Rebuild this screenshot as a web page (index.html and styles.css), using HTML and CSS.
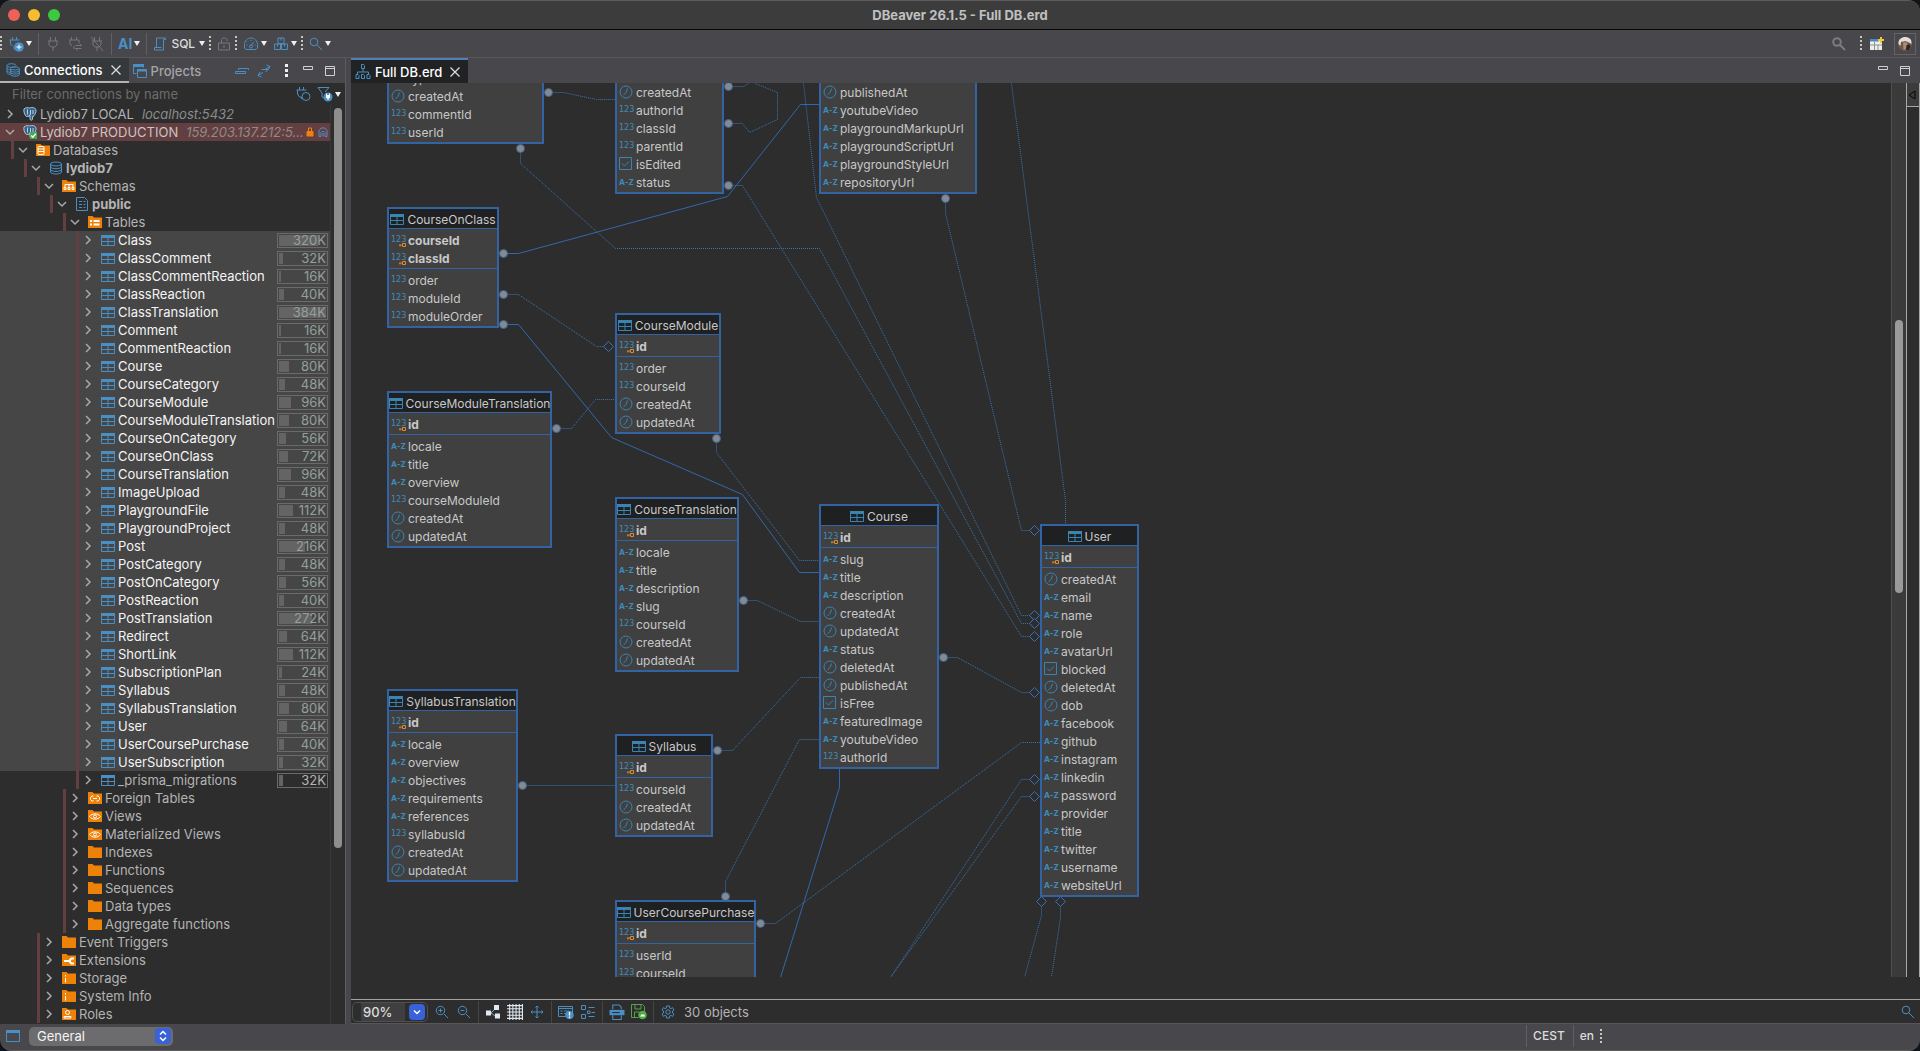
FILE: index.html
```html
<!DOCTYPE html>
<html lang="en">
<head>
    <meta charset="UTF-8">
    <meta name="viewport" content="width=device-width, initial-scale=1.0">
    <title>DBeaver 26.1.5 - Full DB.erd</title>
    <link rel="stylesheet" href="styles.css">
</head>
<body>
    <!-- Icon sprite -->
    <svg class="sprite" aria-hidden="true">
        <symbol id="i-plug" viewBox="0 0 16 16"><path d="M5.500 1v4M10.500 1v4M3 5h10M4 5v4l2 2h4l2-2V5M8 11v4" /></symbol>
        <symbol id="i-plug-add" viewBox="0 0 16 16"><path d="M4.500 1v3M8.500 1v3M1.500 4h10M2.500 4v4l2 2M6 10v3h2" /><circle cx="11" cy="11" r="4.800" fill="#4a90c8" stroke="none" /><path d="M11 8.500v5M8.500 11h5" stroke="#fff" /></symbol>
        <symbol id="i-plug-sync" viewBox="0 0 16 16"><path d="M4.500 1v3M9.500 1v3M2 4h10v3M3 4v4l2 2M7 13v-3M8.500 9.500h6l-2-2M14.500 12.500h-6l2 2" /></symbol>
        <symbol id="i-plug-off" viewBox="0 0 16 16"><path d="M5.500 1v4M10.500 1v4M3 5h10M4 5v4l2 2h4l2-2V5M8 11v4M2 1l12 14" /></symbol>
        <symbol id="i-script" viewBox="0 0 14 14"><path d="M3.500 10V1h9v1.500h-2V13h-9v-2.500h7" /></symbol>
        <symbol id="i-lock" viewBox="0 0 14 14"><path d="M1.500 6h11v7h-11zM4.500 6V2.500L6 1h2.500L10 2.500V4M7 8v3" /></symbol>
        <symbol id="i-gauge" viewBox="0 0 16 16"><path d="M1.500 12V8.500C1.500 5 4.500 2 8 2s6.500 3 6.500 6.500V12l-1.500 1.500H3zM8 10l2.500-4M3.500 9h1M11.500 9h1M8 4v1M5 5.500l.5.5" /><circle cx="8" cy="10.500" r="1.500" /></symbol>
        <symbol id="i-boxes" viewBox="0 0 16 16"><path d="M5 2h6v5.500H5zM1.500 8h6v5.500h-6zM8.500 8h6v5.500h-6zM8 2v2.500M4.500 8v2.500M11.500 8v2.500" /></symbol>
        <symbol id="i-search" viewBox="0 0 14 14"><circle cx="5" cy="5" r="3.800" /><path d="M8 8l5 5" /></symbol>
        <symbol id="i-zoom-in" viewBox="0 0 14 14"><circle cx="5.500" cy="5.500" r="4.200" /><path d="M9 9l4 4M3.500 5.500h4M5.500 3.500v4" /></symbol>
        <symbol id="i-zoom-out" viewBox="0 0 14 14"><circle cx="5.500" cy="5.500" r="4.200" /><path d="M9 9l4 4M3.500 5.500h4" /></symbol>
        <symbol id="i-databases" viewBox="0 0 14 14"><ellipse cx="5.500" cy="2.500" rx="4.500" ry="1.800" /><path d="M1 2.500v7c0 1 1 1.600 3 1.800M1 5c0 1 2 1.800 4 1.800M1 7.500c0 1 1 1.500 3 1.700" /><ellipse cx="9" cy="5.500" rx="4.300" ry="1.500" /><path d="M4.700 5.500v6c0 1 2 1.700 4.300 1.700s4.300-.7 4.300-1.700v-6M4.700 7.500c0 1 2 1.600 4.300 1.600s4.300-.6 4.300-1.600M4.700 9.500c0 1 2 1.600 4.300 1.600s4.300-.6 4.300-1.600" /></symbol>
        <symbol id="i-projects" viewBox="0 0 14 14"><path d="M.5 1.500h10v2M.5 1.500v8h3" /><path d="M4.500 5.500h9v8h-9z" /><path d="M0 0h11v3H0zM4 5h10v2.500H4z" fill="currentColor" stroke="none" /></symbol>
        <symbol id="i-link" viewBox="0 0 14 14"><path d="M4.500 5.500h6.500l-2.500 2.500M13 2.500L8 5.500M9.500 1L13 2.500l-2 3.500M1 11.500l5-3M1 11.500L4.500 13M1 11.500L3 8" /></symbol>
        <symbol id="i-collapse" viewBox="0 0 14 14"><path d="M3.500 6v-1.500H13.500V6M.5 9.500V7.500h10v2z" /></symbol>
        <symbol id="i-connect-filter" viewBox="0 0 16 16"><path d="M4.500 1v3M8.500 1v3M1.500 4h10M2.500 4v4l2 3h2v2" /><circle cx="11" cy="10.500" r="4" /></symbol>
        <symbol id="i-funnel" viewBox="0 0 16 16"><path d="M1 1.500h11L8 6M1 1.500L5 7v4l2 1" /><circle cx="11" cy="11" r="4.500" fill="#4a90c8" stroke="none" /><path d="M9 9h4v2.500l-1 1h-2l-1-1z" fill="#fff" stroke="none" /><path d="M9.500 7.500v2M12.500 7.500v2M11 12v2" stroke="#fff" /></symbol>
        <symbol id="i-database" viewBox="0 0 14 14"><ellipse cx="7" cy="3" rx="5.500" ry="2" /><path d="M1.500 3v8c0 1.200 2.500 2 5.500 2s5.500-.8 5.500-2V3M1.500 5.700c0 1.200 2.500 2 5.500 2s5.500-.8 5.500-2M1.500 8.400c0 1.200 2.500 2 5.500 2s5.500-.8 5.500-2" /></symbol>
        <symbol id="i-schema" viewBox="0 0 14 14"><path d="M1.500.5h8l3 3v10h-11zM4 4.500h3M4 7.500h3M4 10.500h3M8.500 4.500h2M8.500 7.500h2M8.500 10.500h2" /></symbol>
        <symbol id="i-table" viewBox="0 0 14 14"><path d="M.5 2.500h13v10H.5zM7 4v8M.5 8.500h13" /><path d="M0 2h14v3H0z" fill="currentColor" stroke="none" /></symbol>
        <symbol id="i-folder" viewBox="0 0 14 14"><path d="M0 1h4.500l1.500 1.500h8V13H0z" fill="#ee8208" stroke="none" /></symbol>
        <symbol id="i-folder-db" viewBox="0 0 14 14"><use href="#i-folder" /><path d="M2.500 3.500h5l.5.5v7l-.5.500h-5L2 11V4zM2 6h6M2 8.500h6" stroke="#fff" /></symbol>
        <symbol id="i-folder-schema" viewBox="0 0 14 14"><use href="#i-folder" /><path d="M3 8V5.500h8V8M7 5.500V8M2 8.500h2v2H2zM6 8.500h2v2H6zM10 8.500h2v2h-2z" stroke="#fff" /></symbol>
        <symbol id="i-folder-tables" viewBox="0 0 14 14"><use href="#i-folder" /><path d="M2 6h2M5.500 6h6M2 9.500h2M5.500 9.500h6" stroke="#fff" stroke-width="2" /></symbol>
        <symbol id="i-folder-link" viewBox="0 0 14 14"><use href="#i-folder" /><path d="M5.500 5H4L2.500 6.500v2L4 10h1.500M8.500 5H10l1.500 1.500v2L10 10H8.500M5 7.500h4" stroke="#fff" /></symbol>
        <symbol id="i-folder-eye" viewBox="0 0 14 14"><use href="#i-folder" /><path d="M1.500 7.500C4 4 10 4 12.500 7.500 10 11 4 11 1.500 7.500z" stroke="#fff" /><circle cx="7" cy="7.500" r="1.500" stroke="#fff" /></symbol>
        <symbol id="i-folder-ext" viewBox="0 0 14 14"><use href="#i-folder" /><path d="M2 8h6M12 5.500H9.500L8 7v2l1.500 1.500H12" stroke="#fff" stroke-width="2" /></symbol>
        <symbol id="i-folder-info" viewBox="0 0 14 14"><use href="#i-folder" /><path d="M3.500 4v1.500M3.500 7v4.500" stroke="#fff" /></symbol>
        <symbol id="i-folder-role" viewBox="0 0 14 14"><use href="#i-folder" /><circle cx="5.500" cy="5.500" r="2" stroke="#fff" /><path d="M2 11V9.500h7V11z" stroke="#fff" /></symbol>
        <symbol id="i-postgres" viewBox="0 0 14 14"><path d="M1 2C3 .3 5 .5 6.500 1 9 0 12.500.5 13 3c.3 2-1 4.500-2 5.500l-.5 1h-1V12c-.5 2-2.500 1.500-2.500-.5V9L3.500 9.500C1.500 8 .3 4 1 2z" fill="#31648c" stroke="#d5dde6" stroke-width=".8" /><path d="M4.500 2.500v5M7.500 3v4l-1 2M10 3v4" stroke="#e6ecf2" stroke-width=".8" /></symbol>
        <symbol id="i-postgres-ok" viewBox="0 0 14 14"><use href="#i-postgres" /><path d="M7 7h7v7H7z" fill="#37b24d" stroke="none" /><path d="M8.200 10.500l1.600 1.700 3-3.500" stroke="#fff" stroke-width="1.400" /></symbol>
        <symbol id="i-padlock" viewBox="0 0 8 10"><path d="M1 4.500h6v4.500H1z" fill="#ee8208" stroke="#ee8208" /><path d="M2.500 4.500V1h3v3.500" stroke="#ee8208" /></symbol>
        <symbol id="i-tunnel" viewBox="0 0 10 10"><path d="M1 9.500V3.500l2-2.500h4l2 2.500v6h-2v-4l-1-1h-2l-1 1v4zM5 6v3.500" /></symbol>
        <symbol id="i-erd" viewBox="0 0 16 16"><path d="M6.500.5h2l1 1v3h-3zM8 5v3M2.500 10V8h11v2M1 10.500h2l1 1v3H1zM6.500 10.500h2l1 1v3h-3zM12 10.500h2l1 1v3h-3z" /></symbol>
        <symbol id="i-close" viewBox="0 0 10 10"><path d="M.5.500l9 9M9.500.5l-9 9" stroke-width="1.300" /></symbol>
        <symbol id="i-minimize" viewBox="0 0 10 10"><path d="M.5.500h9v3h-9z" /></symbol>
        <symbol id="i-maximize" viewBox="0 0 10 10"><path d="M.5.500h9v9h-9zM.5 2.500h9" /></symbol>
        <symbol id="i-clock" viewBox="0 0 14 14"><circle cx="7" cy="7" r="6" /><path d="M8.500 3.500L7 7.500l-2.500 2.500" /></symbol>
        <symbol id="i-bool" viewBox="0 0 14 14"><path d="M.5.500h12v12H.5z" /><path d="M3 6.500l2.500 2.500L10 4.500" /></symbol>
        <symbol id="i-key" viewBox="0 0 7 4"><path d="M0 2h3M3.500.5h3v3h-3zM1 2v1.500" stroke="#e08a2a" /></symbol>
        <symbol id="i-arrange" viewBox="0 0 14 14"><path d="M5 8l4-4M5 8l4 3" stroke="#8fa9bd" /><path d="M0 5.500h5v5H0zM8 0h5v5H8zM9 8.500h5v5H9z" fill="#dfe9f2" stroke="none" /></symbol>
        <symbol id="i-grid" viewBox="0 0 15 15"><path d="M2.500 0v15M5.500 0v15M8.500 0v15M11.500 0v15M0 1.500h15M0 4.500h15M0 7.500h15M0 10.500h15M0 13.500h15M14.500 0v15" stroke="#dfe9f2" /></symbol>
        <symbol id="i-move" viewBox="0 0 14 14"><path d="M7 1v12M1 7h12M5.500 2.500L7 1l1.500 1.500M5.500 11.500L7 13l1.500-1.500M2.500 5.500L1 7l1.500 1.500M11.500 5.500L13 7l-1.500 1.500" /></symbol>
        <symbol id="i-notation" viewBox="0 0 16 16"><path d="M.5 2.500h14v10H.5zM.5 4.500h14M2.500 7h2M6 7h5M2.500 9.500h2M6 9.500h3" /><circle cx="11.500" cy="11" r="4.300" fill="#4a90c8" stroke="none" /><path d="M11.500 8v3.500M11.500 12.500V14" stroke="#fff" stroke-width="1.300" /></symbol>
        <symbol id="i-outline" viewBox="0 0 16 16"><path d="M1.500 1.500h4v4h-4zM1.500 10.500h4v4h-4zM8.500 3.500h6M11.500 8.500h3.500M8.500 12.500h6M7.500 7h2.500v2.500H7.500z" /></symbol>
        <symbol id="i-printer" viewBox="0 0 15 15"><path d="M3.500 5V1h6l2 2v2M3.500 10.500v4h8v-4" /><path d="M.5 5.500h14v5H.5z" fill="currentColor" stroke="none" /><path d="M3 8h7" stroke="#2d2d2d" /></symbol>
        <symbol id="i-save" viewBox="0 0 16 16"><path d="M.5.500h11l2 2v6M.5.500v13h7M4 .5v4.500h6V.5M3.500 13V8h5" stroke="#5aa04a" /><circle cx="11.500" cy="11" r="4.300" fill="#4fae45" stroke="none" /><path d="M9 12.500l2-2.500 1 1 1-1 1 2.500z" fill="#fff" stroke="none" /></symbol>
        <symbol id="i-gear" viewBox="0 0 14 14"><path d="M5.500 1h3v1.800l1.500.8 1.500-1 1.500 2.400-1.500 1v2l1.500 1-1.500 2.400-1.500-1-1.500.8V13h-3v-1.800L4 10.400l-1.500 1L1 9l1.500-1V6L1 5l1.500-2.400 1.500 1 1.500-.8z" /><circle cx="7" cy="7" r="2.200" /></symbol>
        <symbol id="i-view" viewBox="0 0 14 12"><path d="M.5.500h13v11H.5z" /><path d="M0 0h14v3H0z" fill="currentColor" stroke="none" /></symbol>
        <symbol id="i-perspective" viewBox="0 0 14 14"><path d="M0 2h12v11H0z" fill="#f3f0df" stroke="none" /><path d="M0 2h9v2.500H0z" fill="#4a86c8" stroke="none" /><path d="M4.500 4.500V13M0 8h12M8 8v5" stroke="#7f94a4" /><path d="M11 0v6M8 3h6" stroke="#f4c542" stroke-width="2" /></symbol>
        <symbol id="i-beaver" viewBox="0 0 16 16"><circle cx="8" cy="8" r="7" fill="#6d5648" stroke="none" /><path d="M1.500 8C1 3 5 1 8 1c4 0 7 2 6.500 7L12 6.500 8.500 5 4 6 3.500 10z" fill="#e4dcd6" stroke="none" /><path d="M6 6.500l3.500-.5 1.500 3-2 4-2.500 1z" fill="#a98c78" stroke="none" /><path d="M9.500 9l3-.5 1 2.500-2 3h-2.500z" fill="#2e221d" stroke="none" /></symbol>
    </svg>

    <div class="window">
        <header class="titlebar">
            <div class="lights"><i class="red"></i><i class="yellow"></i><i class="green"></i></div>
            <h1>DBeaver 26.1.5 - Full DB.erd</h1>
        </header>

        <div class="toolbar" role="toolbar" aria-label="Main">
            <i class="grip"></i>
            <button class="tool" aria-label="New connection"><svg class="s16"><use href="#i-plug-add" /></svg><i class="caret"></i></button>
            <i class="sep"></i>
            <button class="tool off" aria-label="Connect"><svg class="s16"><use href="#i-plug" /></svg></button>
            <button class="tool off" aria-label="Reconnect"><svg class="s16"><use href="#i-plug-sync" /></svg></button>
            <button class="tool off" aria-label="Disconnect"><svg class="s16"><use href="#i-plug-off" /></svg></button>
            <i class="sep"></i>
            <button class="tool ai">AI<i class="caret"></i></button>
            <i class="sep"></i>
            <button class="tool sql"><svg class="s14"><use href="#i-script" /></svg><span>SQL</span><i class="caret"></i></button>
            <i class="grip"></i>
            <button class="tool off" aria-label="Commit mode"><svg class="s14"><use href="#i-lock" /></svg></button>
            <i class="grip"></i>
            <button class="tool" aria-label="Dashboard"><svg class="s16"><use href="#i-gauge" /></svg><i class="caret"></i></button>
            <button class="tool" aria-label="Tools"><svg class="s16"><use href="#i-boxes" /></svg><i class="caret"></i></button>
            <i class="grip"></i>
            <button class="tool" aria-label="Search"><svg class="s14"><use href="#i-search" /></svg><i class="caret"></i></button>
            <div class="toolbar-end">
                <button class="tool find" aria-label="Find actions"><svg class="s14"><use href="#i-search" /></svg></button>
                <i class="grip"></i>
                <button class="tool" aria-label="Open perspective"><svg class="s14"><use href="#i-perspective" /></svg></button>
                <button class="tool perspective" aria-label="DBeaver perspective"><svg class="s16"><use href="#i-beaver" /></svg></button>
            </div>
        </div>

        <main class="workbench">
            <aside class="navigator">
                <div class="tabs">
                    <button class="tab active"><svg class="s14"><use href="#i-databases" /></svg>Connections<svg class="s10 close"><use href="#i-close" /></svg></button>
                    <button class="tab"><svg class="s14"><use href="#i-projects" /></svg>Projects</button>
                    <div class="tab-tools">
                        <button class="tool" aria-label="Collapse all"><svg class="s14"><use href="#i-collapse" /></svg></button>
                        <button class="tool" aria-label="Link with editor"><svg class="s14"><use href="#i-link" /></svg></button>
                        <button class="tool kebab" aria-label="View menu"><i></i><i></i><i></i></button>
                        <button class="tool pane" aria-label="Minimize"><svg class="s10"><use href="#i-minimize" /></svg></button>
                        <button class="tool pane" aria-label="Maximize"><svg class="s10"><use href="#i-maximize" /></svg></button>
                    </div>
                </div>
                <div class="filter">
                    <input type="text" aria-label="Filter connections" placeholder="Filter connections by name">
                    <button class="tool" aria-label="Connected only"><svg class="s16"><use href="#i-connect-filter" /></svg></button>
                    <button class="tool" aria-label="Filter"><svg class="s16"><use href="#i-funnel" /></svg><i class="caret"></i></button>
                </div>
                <div class="tree-area">
                    <div class="tree" id="tree" role="tree"></div>
                    <div class="scroll"><div class="thumb"></div></div>
                </div>
            </aside>

            <section class="editor">
                <div class="tabs">
                    <button class="tab file"><svg class="s16"><use href="#i-erd" /></svg>Full DB.erd<svg class="s10 close"><use href="#i-close" /></svg></button>
                    <div class="tab-tools">
                        <button class="tool pane" aria-label="Minimize"><svg class="s10"><use href="#i-minimize" /></svg></button>
                        <button class="tool pane" aria-label="Maximize"><svg class="s10"><use href="#i-maximize" /></svg></button>
                    </div>
                </div>
                <div class="diagram">
                    <div class="canvas">
                        <div class="sheet" id="sheet">
                            <svg class="links" id="links"></svg>
                        </div>
                    </div>
                    <div class="canvas-scroll"><div class="thumb"></div></div>
                    <div class="palette"><button aria-label="Show palette"><svg class="s10"><path d="M8 1v8L2 5z" /></svg></button></div>
                </div>
                <footer class="erd-bar">
                    <div class="combo">
                        <input type="text" value="90%" aria-label="Zoom">
                        <button aria-label="Zoom levels"><svg class="s10"><path d="M2 3.500l3 3 3-3" stroke-width="1.500" /></svg></button>
                    </div>
                    <button class="tool" aria-label="Zoom in"><svg class="s14"><use href="#i-zoom-in" /></svg></button>
                    <button class="tool" aria-label="Zoom out"><svg class="s14"><use href="#i-zoom-out" /></svg></button>
                    <i class="sep"></i>
                    <button class="tool" aria-label="Arrange"><svg class="s14"><use href="#i-arrange" /></svg></button>
                    <button class="tool" aria-label="Grid"><svg class="s16"><use href="#i-grid" /></svg></button>
                    <button class="tool" aria-label="Layout"><svg class="s14"><use href="#i-move" /></svg></button>
                    <i class="sep"></i>
                    <button class="tool" aria-label="Notation"><svg class="s16"><use href="#i-notation" /></svg></button>
                    <button class="tool" aria-label="Outline"><svg class="s16"><use href="#i-outline" /></svg></button>
                    <i class="sep"></i>
                    <button class="tool" aria-label="Print"><svg class="s16"><use href="#i-printer" /></svg></button>
                    <button class="tool" aria-label="Save"><svg class="s16"><use href="#i-save" /></svg></button>
                    <i class="sep"></i>
                    <button class="tool" aria-label="Settings"><svg class="s14"><use href="#i-gear" /></svg></button>
                    <span class="count">30 objects</span>
                    <button class="tool erd-search" aria-label="Search diagram"><svg class="s14"><use href="#i-search" /></svg></button>
                </footer>
            </section>
        </main>

        <footer class="statusbar">
            <svg class="view-icon"><use href="#i-view" /></svg>
            <label class="project">
                <select aria-label="Project"><option>General</option></select>
                <svg class="stepper" viewBox="0 0 16 16"><path d="M5 6.500l3-3 3 3M5 9.500l3 3 3-3" stroke-width="1.500" /></svg>
            </label>
            <div class="locale">
                <span>CEST</span>
                <span>en</span>
                <i class="grip"></i>
            </div>
        </footer>
    </div>
    <script src="script.js"></script>
</body>
</html>
```

FILE: styles.css
```css
* {
    box-sizing: border-box;
    margin: 0;
    padding: 0;
}
body {
    height: 100vh;
    background: #10151a;
    color: #b4b4b4;
    font-family: Inter, "Liberation Sans", sans-serif;
    font-size: 13px;
    overflow: hidden;
}
button, input, select {
    font: inherit;
    color: inherit;
    background: none;
    border: none;
    outline: none;
}
svg {
    display: block;
    flex: none;
    fill: none;
    stroke: currentColor;
}
.sprite {
    position: absolute;
    width: 0;
    height: 0;
}
.s10 { width: 10px; height: 10px; }
.s14 { width: 14px; height: 14px; }
.s16 { width: 16px; height: 16px; }

.window {
    display: flex;
    flex-direction: column;
    height: 100vh;
    border: 1px solid #5c5c5c;
    border-width: 1px 0;
    border-radius: 12px;
    background: #48484c;
    overflow: hidden;
}

/* Title bar */
.titlebar {
    display: grid;
    grid-template-columns: 1fr auto 1fr;
    align-items: center;
    height: 29px;
    padding: 0 8px;
    background: #3c3c3c;
    border-bottom: 1px solid #060606;
}
.titlebar h1 {
    font-size: 13px;
    font-weight: 700;
    color: #c0c0c0;
}
.lights {
    display: flex;
    gap: 8px;
}
.lights i {
    width: 12px;
    height: 12px;
    border-radius: 50%;
}
.red { background: #ee6058; }
.yellow { background: #f5bd2f; }
.green { background: #3cc840; }

/* Toolbars */
.toolbar {
    display: flex;
    align-items: center;
    gap: 6px;
    height: 28px;
    padding-left: 2px;
    border-bottom: 1px solid #57575b;
}
.tool {
    display: flex;
    align-items: center;
    gap: 2px;
    color: #4a8fc4;
}
.tool.off {
    color: #77777a;
}
.caret {
    border: 3px solid transparent;
    border-top: 5px solid #f0f0f0;
    border-bottom: none;
}
.grip {
    width: 2px;
    height: 15px;
    margin-left: -2px;
    background: repeating-linear-gradient(#c8c8b8 0 2px, transparent 2px 4px);
}
.sep {
    width: 1px;
    height: 22px;
    background: #606064;
}
.tool.ai {
    font-size: 14px;
    font-weight: 700;
}
.tool.sql {
    gap: 4px;
}
.sql span {
    font-size: 12px;
    font-weight: 500;
    color: #dcdcdc;
}
.toolbar-end {
    display: flex;
    align-items: center;
    gap: 8px;
    margin-left: auto;
    padding-right: 4px;
}
.toolbar-end .find {
    color: #7c7c7e;
    margin-right: 8px;
}
.find svg {
    stroke-width: 2;
}
.toolbar-end .perspective {
    padding: 2px;
    margin-left: 2px;
    border: 1px solid #636366;
}

/* Workbench */
.workbench {
    flex: 1;
    display: flex;
    gap: 5px;
    min-height: 0;
}
.navigator {
    display: flex;
    flex-direction: column;
    width: 346px;
    border-right: 1px solid #5c5c60;
}
.tabs {
    display: flex;
    align-items: center;
    height: 25px;
}
.tab {
    display: flex;
    align-items: center;
    gap: 4px;
    height: 25px;
    padding: 0 4px;
    font-weight: 500;
    color: #a4a4a8;
}
.tab svg {
    color: #4a8fc4;
}
.tab .close {
    margin: 0 4px;
    color: #dcdcdc;
}
.tab.active {
    color: #fff;
    padding-left: 6px;
    background: #36393c;
    border-bottom: 2px solid #b4b4b4;
}
.tab-tools {
    display: flex;
    align-items: center;
    gap: 8px;
    margin-left: auto;
    padding-right: 8px;
}
.kebab {
    flex-direction: column;
    width: 14px;
}
.kebab i {
    width: 3px;
    height: 3px;
    background: #f0f0f0;
}
.tab-tools .pane {
    width: 14px;
    height: 10px;
    align-items: flex-start;
    justify-content: center;
    color: #d0d0d0;
}
.filter {
    display: flex;
    align-items: center;
    gap: 6px;
    height: 22px;
    padding: 0 4px 0 12px;
    background: #2d2d2d;
}
.filter input {
    flex: 1;
    min-width: 0;
}
.filter input::placeholder {
    color: #6c6c6c;
}
.tree-area {
    flex: 1;
    display: flex;
    min-height: 0;
    background: #2d2d2d;
}
.tree {
    flex: 1;
    min-width: 0;
    overflow: hidden;
}
.scroll {
    width: 15px;
    padding: 3px;
    border-left: 1px solid #383838;
}
.thumb {
    border-radius: 4px;
    background: #8e8e8e;
}
.scroll .thumb {
    height: 81%;
    width: 8px;
}

/* Tree rows */
.row {
    display: flex;
    align-items: center;
    height: 18px;
    padding-left: calc(13px * var(--level) - 2px);
    padding-right: 2px;
    white-space: nowrap;
}
.row.root {
    padding-left: 5px;
}
.row .stripe {
    align-self: stretch;
    width: 3px;
    margin-right: 4px;
    background: #643f41;
}
.row .chevron {
    width: 10px;
    height: 10px;
    margin-right: 8px;
    color: #a8a8a8;
}
.row .icon {
    margin-right: 3px;
    color: #4a8fc4;
}
.row.bold {
    font-weight: 700;
}
.row.selected {
    background: #464646;
}
.row.selected .label {
    color: #f4f4f4;
}
.row.production {
    background: #643f41;
    color: #c8c4c4;
}
.host {
    margin-left: 8px;
    font-style: italic;
    color: #8c8c8c;
}
.badges {
    display: flex;
    gap: 4px;
    margin-left: auto;
    color: #4a8fc4;
}
.lock {
    width: 8px;
    height: 10px;
}
.size {
    display: flex;
    align-items: center;
    position: relative;
    width: 51px;
    height: 15px;
    margin-left: auto;
    padding: 1px;
    border: 1px solid #6a6a6a;
}
.size .bar {
    height: 11px;
    background: #646464;
}
.size span {
    position: absolute;
    right: 1px;
    color: #94a09c;
}
.row:not(.selected) .size span {
    color: #b4b4b4;
}

/* Editor */
.editor {
    flex: 1;
    display: flex;
    flex-direction: column;
    min-width: 0;
    background: #2d2d2d;
}
.editor .tabs {
    background: #48484c;
}
.tab.file {
    padding: 0 4px;
    color: #fff;
    background: #202224;
    border-top: 2px solid #4f7fb5;
}
.diagram {
    flex: 1;
    display: flex;
    min-height: 0;
    margin-bottom: 22px;
}
.canvas {
    position: relative;
    flex: 1;
    overflow: hidden;
}
.canvas-scroll {
    width: 15px;
    padding: 237px 3px 0;
    background: #3a3a3a;
    border-left: 1px solid #505050;
}
.canvas-scroll .thumb {
    height: 273px;
    background: #9a9a9a;
}
.palette {
    width: 14px;
    border: 1px solid #a8a8a8;
    border-width: 0 1px;
}
.palette button {
    display: block;
    width: 100%;
    height: 24px;
    border-bottom: 1px solid #a8a8a8;
    background: #3c3c3c;
    color: #050505;
}

/* Diagram sheet, scrolled inside the canvas */
.sheet {
    position: absolute;
    left: -351px;
    top: -83px;
    width: 1900px;
    height: 1100px;
}
.links {
    position: absolute;
    width: 100%;
    height: 100%;
    stroke: #3168ad;
}
.links .dotted {
    stroke: #3877b4;
    stroke-dasharray: 1 1;
}
.links .dot {
    fill: #838a92;
    stroke: #3d608a;
}
.links .diamond {
    fill: #2d2d2d;
    stroke: #3a70b8;
}
.entity {
    position: absolute;
    border: 2px solid #3463a3;
    background: #404040;
    font-size: 12px;
    color: #c8c8c8;
    white-space: nowrap;
}
.entity h2 {
    display: flex;
    align-items: center;
    justify-content: center;
    gap: 3px;
    height: 20px;
    padding-top: 1px;
    font-size: 12px;
    font-weight: 400;
    background: #1f2021;
    border-bottom: 1px solid #3463a3;
}
.entity svg {
    color: #3a84b4;
}
.entity ul {
    padding: 2px 0 1px;
    list-style: none;
}
.entity li {
    display: flex;
    align-items: center;
    gap: 3px;
    height: 18px;
    padding-left: 2px;
}
.entity .keys {
    font-weight: 700;
    border-bottom: 1px solid #3463a3;
}
.type {
    position: relative;
    width: 14px;
    font-size: 8px;
    line-height: 12px;
    font-weight: 400;
    text-align: center;
    color: #3e8cbc;
}
.type.num {
    font-family: "DejaVu Sans", sans-serif;
}
.type.str {
    font-weight: 700;
}
.type svg {
    position: absolute;
    right: -1px;
    bottom: -1px;
    width: 7px;
    height: 4px;
}

/* Diagram toolbar */
.erd-bar {
    display: flex;
    align-items: center;
    gap: 6px;
    height: 25px;
    border-top: 1px solid #a0a0a0;
    border-bottom: 1px solid #57575b;
}
.erd-bar .tool {
    justify-content: center;
    width: 16px;
}
.combo {
    display: flex;
    align-items: center;
    width: 76px;
    height: 20px;
    margin-left: 1px;
    padding: 0 2px 0 8px;
    border: 1px solid #505050;
    border-radius: 5px;
}
.combo input {
    width: 44px;
    height: 18px;
    padding-left: 2px;
    background: #3f3f41;
    color: #dcdcdc;
    font-weight: 500;
}
.combo button {
    display: grid;
    place-items: center;
    width: 16px;
    height: 16px;
    margin-left: auto;
    border-radius: 4px;
    background: #3a62d8;
    color: #fff;
}
.erd-bar .sep {
    background: #454545;
}
.count {
    margin-left: 2px;
}
.erd-bar .erd-search {
    margin-left: auto;
    margin-right: 4px;
}

/* Status bar */
.statusbar {
    display: flex;
    align-items: center;
    height: 26px;
    padding: 0 0 2px 6px;
}
.view-icon {
    width: 14px;
    height: 12px;
    color: #4a8fc4;
}
.project {
    display: flex;
    align-items: center;
    width: 144px;
    height: 19px;
    margin-left: 9px;
    border-radius: 5px;
    background: #6c6c6e;
}
.project select {
    flex: 1;
    height: 19px;
    padding-left: 8px;
    appearance: none;
    color: #f4f4f4;
}
.stepper {
    width: 16px;
    height: 16px;
    margin-right: 2px;
    border-radius: 4px;
    background: #3a62d8;
    color: #fff;
    pointer-events: none;
}
.locale {
    display: flex;
    align-items: center;
    gap: 8px;
    height: 22px;
    margin-left: auto;
    padding-right: 318px;
    font-size: 12px;
    font-weight: 500;
    color: #dcdcdc;
}
.locale span {
    line-height: 22px;
    padding-left: 6px;
    border-left: 1px solid #606064;
}
```

FILE: script.js
```js
const use = (id, cls) => `<svg class="${cls}"><use href="#i-${id}" /></svg>`;

// ---------- Navigator tree ----------
const tables = [
    ['Class', 320], ['ClassComment', 32], ['ClassCommentReaction', 16], ['ClassReaction', 40],
    ['ClassTranslation', 384], ['Comment', 16], ['CommentReaction', 16], ['Course', 80],
    ['CourseCategory', 48], ['CourseModule', 96], ['CourseModuleTranslation', 80],
    ['CourseOnCategory', 56], ['CourseOnClass', 72], ['CourseTranslation', 96], ['ImageUpload', 48],
    ['PlaygroundFile', 112], ['PlaygroundProject', 48], ['Post', 216], ['PostCategory', 48],
    ['PostOnCategory', 56], ['PostReaction', 40], ['PostTranslation', 272], ['Redirect', 64],
    ['ShortLink', 112], ['SubscriptionPlan', 24], ['Syllabus', 48], ['SyllabusTranslation', 80],
    ['User', 64], ['UserCoursePurchase', 40], ['UserSubscription', 32]
];
const maxSize = 384;

const rows = [
    { level: 0, icon: 'postgres', label: 'Lydiob7 LOCAL', host: 'localhost:5432', cls: 'root' },
    { level: 0, icon: 'postgres-ok', label: 'Lydiob7 PRODUCTION', host: '159.203.137.212:5...', cls: 'root production', open: true, badges: true },
    { level: 1, icon: 'folder-db', label: 'Databases', open: true },
    { level: 2, icon: 'database', label: 'lydiob7', open: true, cls: 'bold' },
    { level: 3, icon: 'folder-schema', label: 'Schemas', open: true },
    { level: 4, icon: 'schema', label: 'public', open: true, cls: 'bold' },
    { level: 5, icon: 'folder-tables', label: 'Tables', open: true },
    ...tables.map(([label, size]) => ({ level: 6, icon: 'table', label, size, cls: 'selected' })),
    { level: 6, icon: 'table', label: '_prisma_migrations', size: 32 },
    { level: 5, icon: 'folder-link', label: 'Foreign Tables' },
    { level: 5, icon: 'folder-eye', label: 'Views' },
    { level: 5, icon: 'folder-eye', label: 'Materialized Views' },
    { level: 5, icon: 'folder', label: 'Indexes' },
    { level: 5, icon: 'folder', label: 'Functions' },
    { level: 5, icon: 'folder', label: 'Sequences' },
    { level: 5, icon: 'folder', label: 'Data types' },
    { level: 5, icon: 'folder', label: 'Aggregate functions' },
    { level: 3, icon: 'folder', label: 'Event Triggers' },
    { level: 3, icon: 'folder-ext', label: 'Extensions' },
    { level: 3, icon: 'folder-info', label: 'Storage' },
    { level: 3, icon: 'folder-info', label: 'System Info' },
    { level: 3, icon: 'folder-role', label: 'Roles' }
];

document.getElementById('tree').innerHTML = rows.map(r => `
    <div class="row ${r.cls || ''}" role="treeitem" style="--level:${r.level}">
        ${r.level ? '<i class="stripe"></i>' : ''}
        <svg class="chevron"><path d="${r.open ? 'M1 3l4 4 4-4' : 'M3 1l4 4-4 4'}" stroke-width="1.500" /></svg>
        ${use(r.icon, 's14 icon')}
        <span class="label">${r.label}</span>
        ${r.host ? `<span class="host">${r.host}</span>` : ''}
        ${r.badges ? `<span class="badges">${use('padlock', 'lock')}${use('tunnel', 's10')}</span>` : ''}
        ${r.size ? `<div class="size"><div class="bar" style="width:${r.size / maxSize * 100}%"></div><span>${r.size}K</span></div>` : ''}
    </div>`).join('');

// ---------- Diagram ----------
// column type prefix: n = number, s = string, d = date, b = boolean
const entities = [
    { x: 387, y: 65, w: 157, cols: 's:type d:createdAt n:commentId n:userId' },
    { x: 615, y: 79, w: 109, cols: 'd:createdAt n:authorId n:classId n:parentId b:isEdited s:status' },
    { x: 819, y: 79, w: 158, cols: 'd:publishedAt s:youtubeVideo s:playgroundMarkupUrl s:playgroundScriptUrl s:playgroundStyleUrl s:repositoryUrl' },
    { name: 'CourseOnClass', x: 387, y: 207, w: 112, keys: 'courseId classId', cols: 'n:order n:moduleId n:moduleOrder' },
    { name: 'CourseModule', x: 615, y: 313, w: 106, keys: 'id', cols: 'n:order n:courseId d:createdAt d:updatedAt' },
    { name: 'CourseModuleTranslation', x: 387, y: 391, w: 165, keys: 'id', cols: 's:locale s:title s:overview n:courseModuleId d:createdAt d:updatedAt' },
    { name: 'CourseTranslation', x: 615, y: 497, w: 124, keys: 'id', cols: 's:locale s:title s:description s:slug n:courseId d:createdAt d:updatedAt' },
    { name: 'Course', x: 819, y: 504, w: 120, keys: 'id', cols: 's:slug s:title s:description d:createdAt d:updatedAt s:status d:deletedAt d:publishedAt b:isFree s:featuredImage s:youtubeVideo n:authorId' },
    { name: 'User', x: 1040, y: 524, w: 99, keys: 'id', cols: 'd:createdAt s:email s:name s:role s:avatarUrl b:blocked d:deletedAt d:dob s:facebook s:github s:instagram s:linkedin s:password s:provider s:title s:twitter s:username s:websiteUrl' },
    { name: 'SyllabusTranslation', x: 387, y: 689, w: 131, keys: 'id', cols: 's:locale s:overview s:objectives s:requirements s:references n:syllabusId d:createdAt d:updatedAt' },
    { name: 'Syllabus', x: 615, y: 734, w: 98, keys: 'id', cols: 'n:courseId d:createdAt d:updatedAt' },
    { name: 'UserCoursePurchase', x: 615, y: 900, w: 141, keys: 'id', cols: 'n:userId n:courseId' }
];

const typeIcon = {
    n: '<span class="type num">123</span>',
    s: '<span class="type str">A-Z</span>',
    d: use('clock', 's14'),
    b: use('bool', 's14')
};

const sheet = document.getElementById('sheet');
sheet.insertAdjacentHTML('beforeend', entities.map(e => `
    <article class="entity" style="left:${e.x}px;top:${e.y}px;width:${e.w}px">
        ${e.name ? `<h2>${use('table', 's14')}${e.name}</h2>` : ''}
        ${e.keys ? `<ul class="keys">${e.keys.split(' ').map(k => `<li><span class="type num">123${use('key', '')}</span>${k}</li>`).join('')}</ul>` : ''}
        <ul>${e.cols.split(' ').map(c => `<li>${typeIcon[c[0]]}${c.slice(2)}</li>`).join('')}</ul>
    </article>`).join(''));

const solid = [
    '503,253 518,253 727,196 800,104 819,104',
    '503,324 518,324 611,437 742,494 799,572 819,572',
    '839,768 839,787 780,977'
];
const dotted = [
    '548,92 563,92 596,99 615,99',
    '520,148 520,163 615,248 819,248 1021,623 1030,623',
    '728,86 743,86 748,83',
    '755,83 777,92 777,119 749,132 742,123 728,123',
    '728,185 742,185 1021,636 1030,636',
    '803,83 816,197 1021,615 1030,615',
    '945,198 945,213 1021,530 1030,530',
    '1011,83 1065,500 1065,524',
    '503,294 518,294 596,346 604,346',
    '556,428 571,428 595,399 615,399',
    '716,438 716,452 799,560 819,560',
    '743,600 757,600 800,621 819,621',
    '717,750 732,750 800,677 819,677',
    '725,896 725,881 799,739 819,739',
    '760,923 775,923 1021,742 1040,742',
    '522,785 615,785',
    '943,657 957,657 1021,692 1030,692',
    '1030,779 1021,779 890,977',
    '1030,796 1021,796 890,977',
    '1041,905 1041,915 1024,977',
    '1060,905 1060,917 1051,977'
];
const dots = [[548, 92], [520, 148], [728, 86], [728, 123], [728, 185], [503, 253], [503, 294], [503, 324],
    [945, 198], [556, 428], [716, 438], [743, 600], [717, 750], [725, 896], [760, 923], [522, 785], [943, 657]];
const diamonds = [[608, 346], [1034, 530], [1034, 615], [1034, 623], [1034, 636], [1034, 692], [1034, 779],
    [1034, 796], [1041, 901], [1060, 901]];

// half pixel shift keeps the straight segments sharp
document.getElementById('links').innerHTML = `<g transform="translate(.5 .5)">
    ${solid.map(p => `<polyline points="${p}" />`).join('')}
    ${dotted.map(p => `<polyline class="dotted" points="${p}" />`).join('')}
    ${dots.map(([x, y]) => `<circle class="dot" cx="${x}" cy="${y}" r="4" />`).join('')}
    ${diamonds.map(([x, y]) => `<path class="diamond" d="M${x - 5} ${y}l5-5 5 5-5 5z" />`).join('')}
</g>`;
```
